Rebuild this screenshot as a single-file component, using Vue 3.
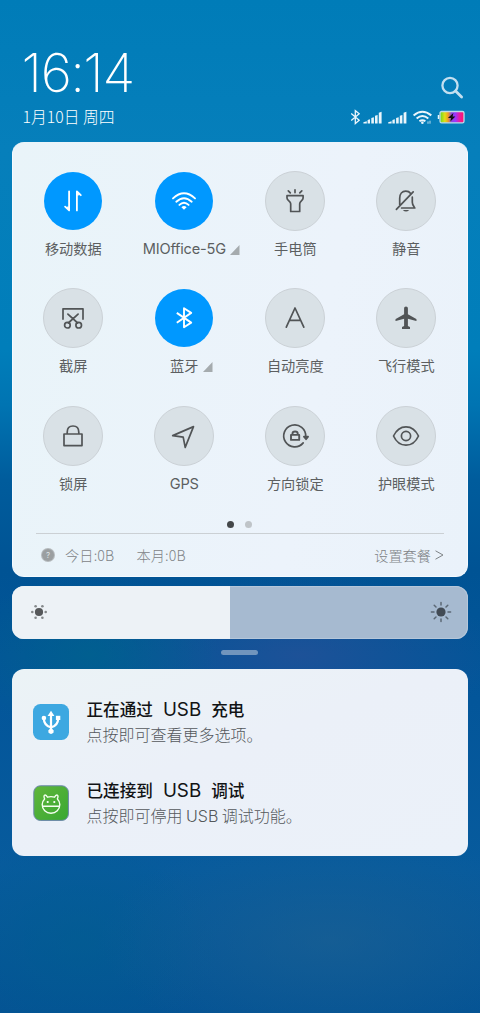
<script setup>
const tiles = [
  { icon: 'data', label: '移动数据', on: true },
  { icon: 'wifi', label: 'MIOffice-5G', on: true, more: true, latin: true },
  { icon: 'torch', label: '手电筒' },
  { icon: 'mute', label: '静音' },
  { icon: 'shot', label: '截屏' },
  { icon: 'bluetooth', label: '蓝牙', on: true, more: true },
  { icon: 'auto', label: '自动亮度' },
  { icon: 'plane', label: '飞行模式' },
  { icon: 'lock', label: '锁屏' },
  { icon: 'gps', label: 'GPS', latin: true },
  { icon: 'rotate', label: '方向锁定' },
  { icon: 'eye', label: '护眼模式' }
]
</script>

<template>
  <main class="screen">
    <header class="status">
      <div class="left">
        <div class="clock">16<span>:</span>14</div>
        <div class="date">1月10日 周四</div>
      </div>
      <div class="right">
        <svg class="search" width="24" height="24" viewBox="0 0 24 24" fill="none" stroke="#c3dff0" stroke-width="2.3" stroke-linecap="round">
          <circle cx="10" cy="9.5" r="7.6" /><path d="M15.6 15.1L21.6 21" stroke-width="2.8" />
        </svg>
        <svg class="indicators" width="118" height="18" viewBox="0 0 118 18" fill="none" stroke="#eaf5fb">
          <path d="M.8 5.4L8.8 12.2L4.9 15.6V2.7L8.8 5.8L.8 12.6" stroke-width="1.3" />
          <g fill="#eaf5fb" stroke="none">
            <path id="bars" d="M13 15.6v-1.4l3.4-.9v2.3zM17.2 15.6v-3.6l2.4-.8v4.4zM20.9 15.6v-5.6l2.6-.8v6.4zM24.6 15.6v-7.8l2.6-.8v8.6zM28.4 15.6v-10.8l2.8-1v11.8z" />
            <use href="#bars" x="24.8" />
          </g>
          <path d="M63.2 7.4Q72 .2 80.9 7.4M66.2 10.5Q72 5.6 77.9 10.5M69 13.3Q72 11.1 75 13.3" stroke-width="2" />
          <circle cx="72" cy="14.8" r="1.3" fill="#eaf5fb" stroke="none" />
          <path d="M77.6 13.4v2.4M79.6 12.7v3" stroke-width=".8" />
          <defs><linearGradient id="charge">
            <stop offset="0" stop-color="#65d820" /><stop offset=".2" stop-color="#e2df16" /><stop offset=".34" stop-color="#f19b24" /><stop offset=".48" stop-color="#8a48de" /><stop offset=".64" stop-color="#9b36ff" /><stop offset=".82" stop-color="#ed1b9c" /><stop offset="1" stop-color="#ff1266" />
          </linearGradient></defs>
          <rect x="89.6" y="3.5" width="24" height="11.3" rx="1.6" fill="url(#charge)" stroke="#bddbea" stroke-width="1.3" />
          <path d="M88.1 7.1v4" stroke-width="1.5" />
          <path d="M103 5L97.5 10H100.7L99.9 13.5L105 8.4H102.2Z" fill="#111" stroke="none" />
        </svg>
      </div>
    </header>

    <section class="panel">
      <div class="tiles">
        <div v-for="t in tiles" :key="t.label" class="tile">
          <div class="disc" :class="{ on: t.on }">
            <svg width="30" height="30" viewBox="0 0 30 30" fill="none" stroke="currentColor" stroke-width="1.7" stroke-linejoin="round" stroke-linecap="round">
              <g v-if="t.icon === 'data'" stroke-width="1.8"><path d="M11.1 5.3V24.4L7.1 20.7M18.9 24.4V5.5L22.8 9.2" /><path d="M10.8 23V20.2L8.2 21ZM19.2 7V9.8L21.8 9Z" fill="currentColor" stroke="none" /></g>
              <g v-else-if="t.icon === 'wifi'" stroke-width="1.9"><path d="M4 12.4Q15 2.2 26 12.4M7.3 15.7Q15 8.6 22.7 15.7M10.4 18.9Q15 14.5 19.6 18.9" /><path d="M12.4 21.3Q15 18.7 17.6 21.3L15 23.8Z" fill="currentColor" stroke="none" /></g>
              <g v-else-if="t.icon === 'torch'"><path d="M7 9.7H23.1V12C23.1 14.6 19.7 15.1 19.7 17.7V25.5H10.7V17.7C10.7 15.1 7 14.6 7 12ZM15 3.8V6.6M8.3 4.8L10.3 6.8M21.8 4.8L19.8 6.8" /></g>
              <g v-else-if="t.icon === 'mute'"><path d="M8.7 18.6V12.3C8.7 7.9 11.2 5.2 14.7 5.2C17.3 5.2 18.6 6 19.4 7.2M21.3 11.2V16.2C21.3 19 22.5 20.2 23.8 22H10.6M5.4 23.4L22.2 5.8" /><path d="M11.8 24H18.2Q15 27.2 11.8 24Z" fill="currentColor" stroke="none" /></g>
              <g v-else-if="t.icon === 'shot'"><path d="M5 16.1V5.8H25V16.1M9.9 11.1L19.7 20M20.1 11.1L10.3 20" /><circle cx="9.4" cy="22.2" r="2.8" /><circle cx="20.7" cy="22.2" r="2.8" /></g>
              <path v-else-if="t.icon === 'bluetooth'" d="M7.8 9.9L22.2 19.6L15 24.2V5.2L22.2 9.9L7.8 19.8" stroke-width="1.9" stroke-linecap="butt" />
              <path v-else-if="t.icon === 'auto'" d="M6.3 24.2L15 5L23.8 24.2M9.7 17.4H20.4" />
              <path v-else-if="t.icon === 'plane'" d="M15 3.6C14 3.6 13.1 4.3 13.1 5.5V11.3L4.7 16.1Q3.9 17.6 4.8 18L13.1 15.8V23L11 24.1V26H19V24.1L16.9 23V15.8L25.2 18Q26.1 17.5 25.3 16.1L16.9 11.3V5.5C16.9 4.3 16 3.6 15 3.6Z" fill="currentColor" stroke="none" />
              <path v-else-if="t.icon === 'lock'" d="M6 13H24V24.6H6ZM9.2 12.8V11.2C9.2 7.3 11.6 5 15 5S20.8 7.3 20.8 11.2V12.8" stroke-linecap="butt" />
              <path v-else-if="t.icon === 'gps'" d="M3.7 14.6L24.5 5.6L16.2 26.4L14.2 16.1Z" />
              <g v-else-if="t.icon === 'rotate'"><path d="M23.2 21.9A11 11 0 1 1 25.7 15.5" /><path d="M23.9 15.7H28.1L26.1 18.3Z" fill="currentColor" /><path d="M11 13.9H19.2V18.9H11ZM12.5 13.7V12.6C12.5 9.7 17.7 9.7 17.7 12.6V13.7" stroke-width="1.9" /></g>
              <g v-else><path d="M2.5 15C5.3 9 9.6 5.8 15 5.8S24.7 9 27.5 15C24.7 21 20.4 24.2 15 24.2S5.3 21 2.5 15Z" /><circle cx="15" cy="15" r="4.6" /></g>
            </svg>
          </div>
          <div class="label" :class="{ latin: t.latin }">{{ t.label }}<svg v-if="t.more" class="corner" width="10" height="10"><path d="M9.5 0V10H0Z" fill="#a5abae" /></svg></div>
        </div>
      </div>
      <div class="pages"><i></i><i></i></div>
      <div class="usage">
        <span class="badge">?</span>
        <span class="today">今日:0B</span>
        <span>本月:0B</span>
        <span class="plan">设置套餐 <svg width="9" height="12" viewBox="0 0 9 12" fill="none" stroke="currentColor"><path d="M.5 1.8L8 6L.5 10.2" /></svg></span>
      </div>
    </section>

    <section class="slider">
      <div class="level">
        <svg width="18" height="18" viewBox="0 0 18 18" fill="#56585a"><circle cx="9" cy="9" r="4.1" /><g fill="#85898b"><circle cx="2.3" cy="9" r="1.3" /><circle cx="15.7" cy="9" r="1.3" /><circle cx="5.6" cy="3.2" r="1.3" /><circle cx="12.4" cy="3.2" r="1.3" /><circle cx="5.6" cy="14.8" r="1.3" /><circle cx="12.4" cy="14.8" r="1.3" /></g></svg>
      </div>
      <svg width="22" height="22" viewBox="0 0 22 22" fill="#424b55"><circle cx="11" cy="11" r="4.6" /><path d="M11 1.4V4M11 18V20.6M1.4 11H4M18 11H20.6M4.2 4.2L6 6M16 16L17.8 17.8M4.2 17.8L6 16M16 6L17.8 4.2" stroke="#5b6875" stroke-width="1.5" stroke-linecap="round" /></svg>
    </section>
    <div class="handle"></div>

    <section class="notices">
      <article>
        <svg width="38" height="38" viewBox="0 0 38 38">
          <rect x="1" y="1" width="36" height="36" rx="7.5" fill="#3da8e1" />
          <g fill="none" stroke="#fff" stroke-width="2.2"><path d="M19 11V28M11.8 15C11.8 20.6 14.5 23.3 19 24.4C23.5 23.3 26.2 20.6 26.2 15" /></g>
          <g fill="#fff"><path d="M19 7.8L22.4 13H15.6Z" /><circle cx="11.9" cy="15" r="2.3" /><rect x="23.9" y="12.8" width="4.4" height="4.2" /><path d="M19 24.5L21.6 27.5V29.6Q19 32.2 16.4 29.6V27.5Z" /></g>
        </svg>
        <div><h2>正在通过<b>USB</b>充电</h2><p>点按即可查看更多选项。</p></div>
      </article>
      <article>
        <svg width="38" height="38" viewBox="0 0 38 38">
          <defs><linearGradient id="leaf" x2="1" y2="1"><stop stop-color="#61b63b" /><stop offset="1" stop-color="#38a832" /></linearGradient></defs>
          <rect x="1.8" y="1.8" width="34.6" height="34.6" rx="6.5" fill="url(#leaf)" stroke="#6a86ab" />
          <g fill="none" stroke="#f5fff1" stroke-width="1.4" stroke-linejoin="round"><path d="M12.6 14.9C11.7 13 11.9 11.4 12.7 11.1C13.7 10.8 14.9 12 15.5 13.2Q19 12 22.5 13.2C23.1 12 24.3 10.8 25.3 11.1C26.1 11.4 26.3 13 25.4 14.9C27 16.4 27.8 18.4 27.8 20.6C27.8 25.5 24 29.2 19 29.2S10.2 25.5 10.2 20.6C10.2 18.4 11 16.4 12.6 14.9ZM10.4 22.2H27.6" /></g>
          <circle cx="15.7" cy="18" r="1.1" fill="#fff" /><circle cx="22.3" cy="18" r="1.1" fill="#fff" />
        </svg>
        <div><h2>已连接到<b>USB</b>调试</h2><p>点按即可停用 <span>USB</span> 调试功能。</p></div>
      </article>
    </section>
  </main>
</template>

<style>
body { margin: 0; }
</style>

<style scoped>
* { box-sizing: border-box; }
svg { display: block; flex: none; }
.screen {
  width: 480px; height: 1013px; overflow: hidden; padding: 0 12.5px 0 12px;
  font-family: "Noto Sans CJK SC", "Noto Sans", sans-serif; font-weight: 300;
  background:
    radial-gradient(ellipse 130px 80px at 90px 655px, rgba(0, 105, 136, .5), transparent),
    radial-gradient(ellipse 200px 80px at 300px 655px, rgba(40, 80, 152, .7), transparent),
    radial-gradient(ellipse 230px 110px at 330px 940px, rgba(33, 98, 145, .55), transparent),
    radial-gradient(ellipse 140px 110px at 80px 940px, rgba(0, 95, 142, .5), transparent),
    linear-gradient(#007cb8 0, #067fbb 150px, #007eba 350px, #0074b2 405px, #005c9c 480px, #005394 570px, #03569a 700px, #075b9d 870px, #045394 1013px);
}
.status { height: 142px; display: flex; justify-content: space-between; color: #fff; }
.left { padding: 42px 0 0 9.5px; }
.clock { font: 200 53.5px/62px Inter, sans-serif; letter-spacing: -1.2px; white-space: nowrap; }
.clock span { margin: 0 -.5px; }
.date { font-size: 15.8px; line-height: 22px; margin: 2px 0 0 1px; white-space: nowrap; }
.right { display: flex; flex-direction: column; align-items: flex-end; padding-top: 76px; }
.search { margin-right: 4px; }
.indicators { margin: 7.5px 2px 0 0; width: 118px; transform: translateX(2.4px); }
.panel {
  height: 435px; border-radius: 12px; padding: 29px 5.5px 0; border: solid #f4faff; border-width: 0 1px 1px;
  background: linear-gradient(100deg, #e9f4f9, #ecf3fb 65%, #eaf2fa);
}
.tiles { display: grid; grid-template-columns: repeat(4, 111px); grid-auto-rows: 117.3px; margin-left: -.7px; }
.tile { display: flex; flex-direction: column; align-items: center; }
.disc {
  width: 60px; height: 60px; border-radius: 50%; display: grid; place-items: center;
  background: #d9e1e6; border: 1px solid #cbd1d6; color: #515456;
}
.disc.on { background: #0098ff; background-clip: padding-box; border-color: transparent; color: #fff; }
.label { position: relative; margin-top: 7px; font-size: 14.2px; font-weight: 400; line-height: 20px; color: #5c5f61; white-space: nowrap; }
.label.latin { font-family: Inter, sans-serif; font-weight: 400; font-size: 14.6px; padding-top: 1px; letter-spacing: -.2px; }
.corner { position: absolute; left: calc(100% + 4px); top: 7px; }
.pages { display: flex; justify-content: center; gap: 11px; height: 10px; margin-top: -2px; }
.pages i { width: 7px; height: 7px; border-radius: 50%; background: #444749; }
.pages i + i { background: #bfc4c8; }
.usage {
  margin: 2px 17px 0 17.5px; height: 43px; border-top: 1px solid #cbd0d4; display: flex; align-items: center;
  padding-left: 6px; font-size: 14.2px; color: #7e8386;
}
.badge { width: 12px; height: 12px; border-radius: 50%; background: #9b9fa1; box-shadow: 0 0 0 1px #b5babd; font: 8px/12px Inter, sans-serif; color: #dfe3e6; text-align: center; }
.today { margin: 0 22px 0 11px; }
.today, .today + span { letter-spacing: .15px; }
.plan { margin-left: auto; display: flex; align-items: center; gap: 4px; }
.slider {
  margin-top: 8.5px; height: 53px; border-radius: 12px; overflow: hidden; display: flex; align-items: center;
  justify-content: space-between; padding-right: 16px; background: #a6bad0;
  box-shadow: inset 0 0 0 1px #b5c7da;
}
.level { width: 217.5px; height: 100%; background: #edf2f6; display: flex; align-items: center; padding-left: 18px; }
.handle { width: 37px; height: 5px; border-radius: 3px; background: #7195bd; margin: 11.5px auto 14px; }
.notices {
  height: 187px; border-radius: 12px; background: linear-gradient(160deg, #ebf3f6, #ebf0f8 45%, #ebf1f9);
  padding: 27px 0 0 20px;
}
article { display: flex; align-items: center; height: 51px; margin-bottom: 30.5px; gap: 16.5px; }
h2 { margin: 0; font-size: 16.6px; line-height: 26px; font-weight: 500; color: #111315; white-space: nowrap; }
h2 b { font: 400 18.8px/20px Inter, sans-serif; margin: 0 10px; }
p { margin: 0; font-size: 16px; line-height: 25px; color: #54585c; white-space: nowrap; }
p span { font-family: Inter, sans-serif; }
</style>
